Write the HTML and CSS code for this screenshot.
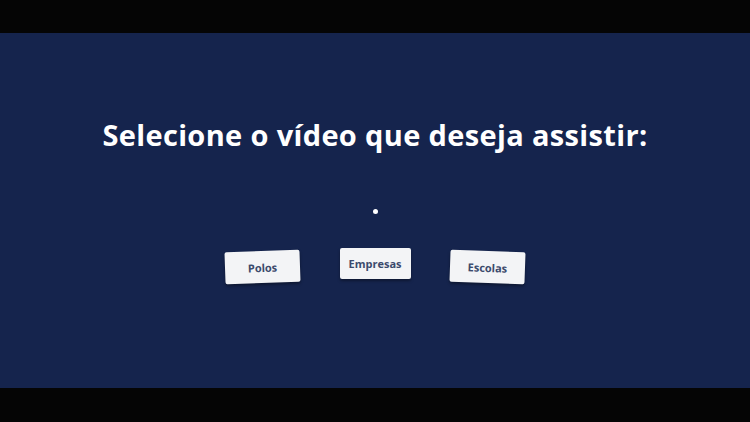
FILE: index.html
```html
<!DOCTYPE html>
<html lang="pt">
<head>
<meta charset="utf-8">
<title>Selecione o vídeo</title>
<link rel="stylesheet" href="styles.css">
</head>
<body>
<main class="stage">
  <h1 class="title">Selecione o vídeo que deseja assistir:</h1>
  <div class="dot"></div>
  <div class="choices">
    <button class="choice tilt-left">Polos</button>
    <button class="choice raised">Empresas</button>
    <button class="choice tilt-right">Escolas</button>
  </div>
</main>
</body>
</html>
```
FILE: styles.css
```css
html, body {
  margin: 0;
  padding: 0;
  background: #050505;
  width: 750px;
  height: 422px;
  overflow: hidden;
}
.stage {
  margin-top: 33px;
  height: 355px;
  background: #15244d;
  display: flex;
  flex-direction: column;
  align-items: center;
  box-sizing: border-box;
  padding-top: 83px;
}
.title {
  margin: 0;
  color: #ffffff;
  font-family: "Open Sans", sans-serif;
  font-weight: 700;
  font-size: 29px;
  line-height: 38px;
  letter-spacing: 0.35px;
}
.dot {
  width: 5px;
  height: 5px;
  border-radius: 50%;
  background: #ffffff;
  margin-top: 55px;
}
.choices {
  display: flex;
  gap: 39.5px;
  align-items: flex-start;
  margin-top: 34px;
}
.choice {
  width: 75px;
  height: 32px;
  border: 0;
  border-radius: 2px;
  background: #f3f4f6;
  color: #3b4a6c;
  font-family: "Open Sans", sans-serif;
  font-weight: 700;
  font-size: 11px;
  box-shadow: 0 2px 3px rgba(0,0,0,0.35);
  padding: 0;
}
.tilt-left { transform: rotate(-2deg); margin-top: 3px; }
.tilt-right { transform: rotate(2deg); margin-top: 3px; }
.raised { width: 71px; height: 31px; }
```
